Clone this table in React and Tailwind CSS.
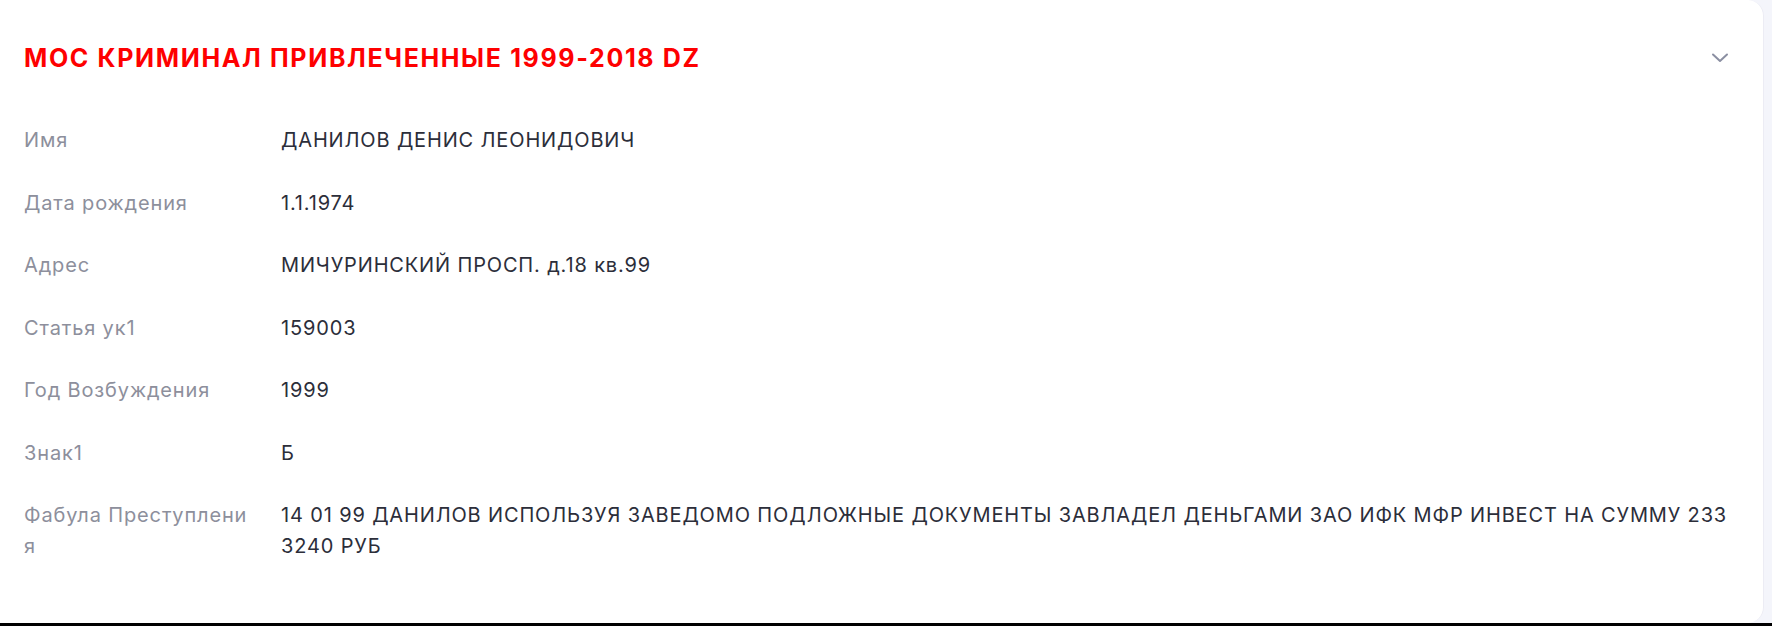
import React from 'react';

const rows = [
  ['Имя', 'ДАНИЛОВ ДЕНИС ЛЕОНИДОВИЧ'],
  ['Дата рождения', '1.1.1974'],
  ['Адрес', 'МИЧУРИНСКИЙ ПРОСП. д.18 кв.99'],
  ['Статья ук1', '159003'],
  ['Год Возбуждения', '1999'],
  ['Знак1', 'Б'],
  [
    'Фабула Преступления',
    '14 01 99 ДАНИЛОВ ИСПОЛЬЗУЯ ЗАВЕДОМО ПОДЛОЖНЫЕ ДОКУМЕНТЫ ЗАВЛАДЕЛ ДЕНЬГАМИ ЗАО ИФК МФР ИНВЕСТ НА СУММУ 2333240 РУБ',
  ],
];

function App() {
  return (
    <div className="w-full h-[626px] bg-[#f4f5fb] flex flex-col font-['Inter',sans-serif] overflow-hidden">
      <div className="w-[1764px] h-[623px] bg-white rounded-r-2xl border-r border-[#ececf4] pl-6 pr-[30px] pt-[40px]">
        <div className="flex items-center justify-between h-[36px] pr-[8px]">
          <h2 className="text-[25px] leading-[36px] font-bold text-[#fe0000] tracking-[1.65px]">
            МОС КРИМИНАЛ ПРИВЛЕЧЕННЫЕ 1999-2018 DZ
          </h2>
          <svg width="18" height="10" viewBox="0 0 18 10" fill="none" className="mr-[-4px]">
            <path d="M2 1.5l7 6.5 7-6.5" stroke="#8b8fa2" strokeWidth="2" strokeLinecap="round" strokeLinejoin="round" />
          </svg>
        </div>

        <div className="mt-[49px] flex flex-col gap-[32px]">
          {rows.map(([label, value]) => (
            <div key={label} className="flex text-[20px] leading-[30.5px] tracking-[0.85px]">
              <div className="w-[257px] shrink-0 pr-[27px] text-[#8d8f9c] break-all">{label}</div>
              <div className="flex-1 text-[#2c2e3a] break-all">{value}</div>
            </div>
          ))}
        </div>
      </div>
      <div className="h-[3px] bg-black" />
    </div>
  );
}

export default App;
